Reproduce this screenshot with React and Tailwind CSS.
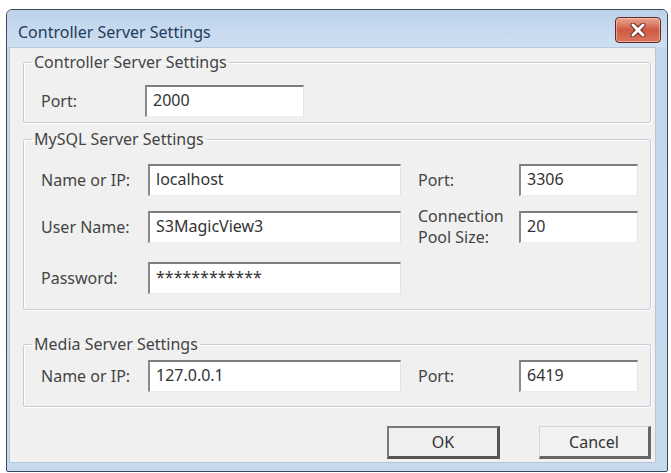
import React from "react";

function Field({ value, w, className = "" }) {
  return (
    <div
      className={`h-[32px] shrink-0 bg-white border-t-[2px] border-l-[2px] border-r border-b border-t-[#7d7d7d] border-l-[#8a8a8a] border-r-[#e4e4e4] border-b-[#ececec] flex items-center pl-[6px] pb-[3px] text-[16px] text-[#333333] ${className}`}
      style={{ width: w }}
    >
      {value}
    </div>
  );
}

function Group({ title, className = "", children }) {
  return (
    <fieldset
      className={`ml-[13px] w-[628px] border border-[#c9cdd1] rounded-[2px] shadow-[inset_1px_1px_0_#ffffff,1px_1px_0_#ffffff] ${className}`}
    >
      <legend className="ml-[8px] px-[2px] text-[16px] leading-[20px] text-[#444444]">
        {title}
      </legend>
      <div className="pl-[17px]">{children}</div>
    </fieldset>
  );
}

function Label({ children, w }) {
  return (
    <div className="text-[16px] leading-[20px] text-[#444444] shrink-0" style={{ width: w }}>
      {children}
    </div>
  );
}

export default function App() {
  return (
    <div className="w-[671px] h-[473px] bg-white pt-[9px] pl-[6px] font-['Noto_Sans',sans-serif]">
      <div className="w-[662px] h-[463px] border border-[#3e4955] rounded-t-[6px] rounded-b-[2px] bg-gradient-to-b from-[#c3d7ed] to-[#c6dcee] flex flex-col overflow-hidden">
        {/* Title bar */}
        <div className="h-[37px] shrink-0 flex items-start justify-between bg-gradient-to-b from-[#bcd2ea] to-[#d0e0f2] pl-[11px] pr-[6px]">
          <span className="mt-[12px] text-[16px] leading-[20px] text-[#233c5b]">
            Controller Server Settings
          </span>
          <div className="mt-[7px] w-[46px] h-[26px] rounded-[4px] border border-[#5f2a22] bg-gradient-to-b from-[#e9a594] via-[#cf5a42] to-[#d8765c] shadow-[inset_0_0_0_1px_rgba(255,210,200,0.55)] flex items-center justify-center">
            <svg width="16" height="14" viewBox="0 0 16 14">
              <path d="M3 2 L13 12 M13 2 L3 12" stroke="#6b2a20" strokeWidth="5" strokeLinecap="round" />
              <path d="M3 2 L13 12 M13 2 L3 12" stroke="#ffffff" strokeWidth="3" strokeLinecap="round" />
            </svg>
          </div>
        </div>

        {/* Body */}
        <div className="flex-1 ml-[2px] mr-[11px] mb-[8px] bg-[#f0f0f0] border border-[#b7c7d8] flex flex-col">
          <Group title="Controller Server Settings" className="mt-[4px] pt-[13px] pb-[5px]">
            <div className="flex items-center h-[32px]">
              <Label w="104px">Port:</Label>
              <Field value="2000" w="159px" />
            </div>
          </Group>

          <Group title="MySQL Server Settings" className="mt-[6px] pt-[15px] pb-[15px]">
            <div className="flex items-center h-[32px]">
              <Label w="107px">Name or IP:</Label>
              <Field value="localhost" w="253px" />
              <div className="w-[17px] shrink-0" />
              <Label w="101px">Port:</Label>
              <Field value="3306" w="119px" />
            </div>
            <div className="flex items-center h-[32px] mt-[15px]">
              <Label w="107px">User Name:</Label>
              <Field value="S3MagicView3" w="253px" />
              <div className="w-[17px] shrink-0" />
              <Label w="101px">
                <div className="leading-[21px]">Connection</div>
                <div className="leading-[21px]">Pool Size:</div>
              </Label>
              <Field value="20" w="119px" />
            </div>
            <div className="flex items-center h-[32px] mt-[19px]">
              <Label w="107px">Password:</Label>
              <Field value="************" w="253px" />
            </div>
          </Group>

          <Group title="Media Server Settings" className="mt-[24px] pt-[6px] pb-[14px]">
            <div className="flex items-center h-[32px]">
              <Label w="107px">Name or IP:</Label>
              <Field value="127.0.0.1" w="253px" />
              <div className="w-[17px] shrink-0" />
              <Label w="101px">Port:</Label>
              <Field value="6419" w="119px" />
            </div>
          </Group>

          <div className="flex justify-end gap-[39px] mt-[19px] pr-[4px]">
            <button className="w-[113px] h-[33px] bg-[#efefef] border-t-[2px] border-l-[2px] border-r-[3px] border-b-[3px] border-t-[#777777] border-l-[#7a7a7a] border-r-[#555555] border-b-[#555555] text-[16px] text-[#333333] flex items-center justify-center">
              OK
            </button>
            <button className="w-[112px] h-[33px] bg-[#f2f2f2] border-t border-l border-r-[3px] border-b-[3px] border-t-[#d6d6d6] border-l-[#d6d6d6] border-r-[#666666] border-b-[#666666] text-[16px] text-[#333333] flex items-center justify-center">
              Cancel
            </button>
          </div>
        </div>
      </div>
    </div>
  );
}
